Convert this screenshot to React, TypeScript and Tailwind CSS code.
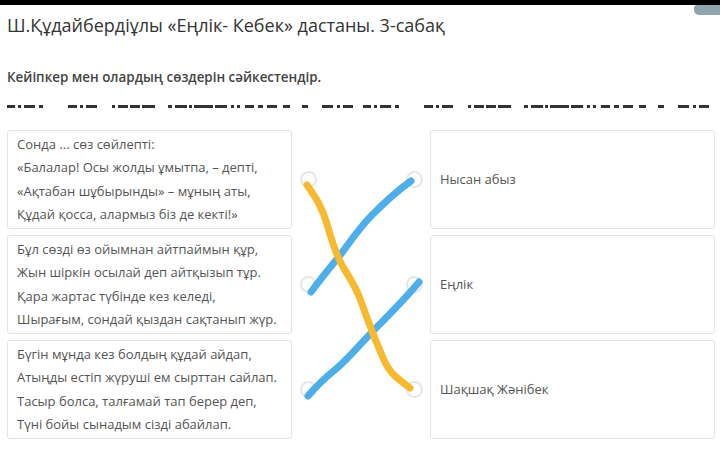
const leftItems = [
	[
		"Сонда ... сөз сөйлепті:",
		"«Балалар! Осы жолды ұмытпа, – депті,",
		"«Ақтабан шұбырынды» – мұның аты,",
		"Құдай қосса, алармыз біз де кекті!»",
	],
	[
		"Бұл сөзді өз ойымнан айтпаймын құр,",
		"Жын шіркін осылай деп айтқызып тұр.",
		"Қара жартас түбінде кез келеді,",
		"Шырағым, сондай қыздан сақтанып жүр.",
	],
	[
		"Бүгін мұнда кез болдың құдай айдап,",
		"Атыңды естіп жүруші ем сырттан сайлап.",
		"Тасыр болса, талғамай тап берер деп,",
		"Түні бойы сынадым сізді абайлап.",
	],
];

const rightItems = ["Нысан абыз", "Еңлік", "Шақшақ Жәнібек"];

// dashed "redacted" strip under the task text, one period of the pattern
const dashSegs: [number, number][] = [
	[7, 15], [18, 21], [24, 35], [39, 43],
	[68, 77], [80, 83], [86, 97],
	[112, 115], [118, 128], [130, 140], [142, 155],
	[168, 172], [175, 187], [189, 192], [194, 213], [215, 227], [231, 234], [237, 240],
	[245, 254], [258, 263], [267, 277], [283, 290], [302, 308],
	[322, 333], [337, 340], [343, 353],
];

const DashStrip = () => (
	<svg width="720" height="5" className="block">
		{[0, 356].map((off) =>
			dashSegs.map(([a, b], i) => {
				const x1 = a + off;
				const x2 = Math.min(b + off, 716);
				if (x1 >= 716) return null;
				return (
					<rect key={`${off}-${i}`} x={x1} y={1} width={x2 - x1} height={3} fill="#333" />
				);
			})
		)}
	</svg>
);

const Dot = () => (
	<span className="block w-[17px] h-[17px] rounded-full border-2 border-[#e6e6e6] bg-white" />
);

export default function App() {
	return (
		<div
			className="w-[720px] h-[451px] bg-white overflow-hidden"
			style={{ fontFamily: '"Open Sans", "Noto Sans", sans-serif' }}
		>
			<div className="relative h-[5px] bg-black">
				<div className="absolute right-0 top-[5px] w-[26px] h-[10px] rounded-bl-[5px] rounded-tl-[3px] bg-[#8fa5ae]" />
			</div>
			<h1 className="pl-[7px] pt-[7px] text-[18px] leading-[26px] text-[#333]">
				Ш.Құдайбердіұлы «Еңлік- Кебек» дастаны. 3-сабақ
			</h1>
			<p className="pl-[7px] mt-[30px] text-[13.4px] leading-[18px] font-semibold text-[#444]">
				Кейіпкер мен олардың сөздерін сәйкестендір.
			</p>
			<div className="mt-[18px]">
				<DashStrip />
			</div>
			<div className="relative mt-[21px] flex flex-col gap-[6px] pl-[7px]">
				{leftItems.map((lines, i) => (
					<div key={i} className="flex h-[99px]">
						<div className="w-[285px] rounded-[3px] border border-[#e4e4e4] px-[9px] pt-[2px] text-[13px] leading-[23.3px] text-[#555]">
							{lines.map((l) => (
								<div key={l} className="whitespace-nowrap">{l}</div>
							))}
						</div>
						<div className="w-[138px] flex items-center justify-between pl-[8px] pr-[7px]">
							<Dot />
							<Dot />
						</div>
						<div className="w-[285px] flex items-center rounded-[3px] border border-[#e4e4e4] pl-[9px] text-[13px] text-[#555]">
							{rightItems[i]}
						</div>
					</div>
				))}
				<svg
					className="absolute left-0 top-0 pointer-events-none"
					width="720"
					height="320"
				>
					<g transform="translate(0,-131)" fill="none" strokeWidth="7" strokeLinecap="round" strokeLinejoin="round">
						<path
							d="M311 293 C322 278 332 266 341 255 C350 243 360 228 372 216 C385 203 398 191 411 182"
							stroke="#4daeea"
						/>
						<path
							d="M308 397 C318 385 326 378 336 370 C350 358 362 343 375 330 C390 315 405 300 419 283"
							stroke="#4daeea"
						/>
						<path
							d="M307 186 C316 199 322 208 327 225 C332 243 336 256 343 268 C352 282 358 292 362 305 C368 322 374 338 381 354 C386 366 389 372 396 378 C402 383 406 386 410 389"
							stroke="#f6b92f"
						/>
					</g>
				</svg>
			</div>
		</div>
	);
}
